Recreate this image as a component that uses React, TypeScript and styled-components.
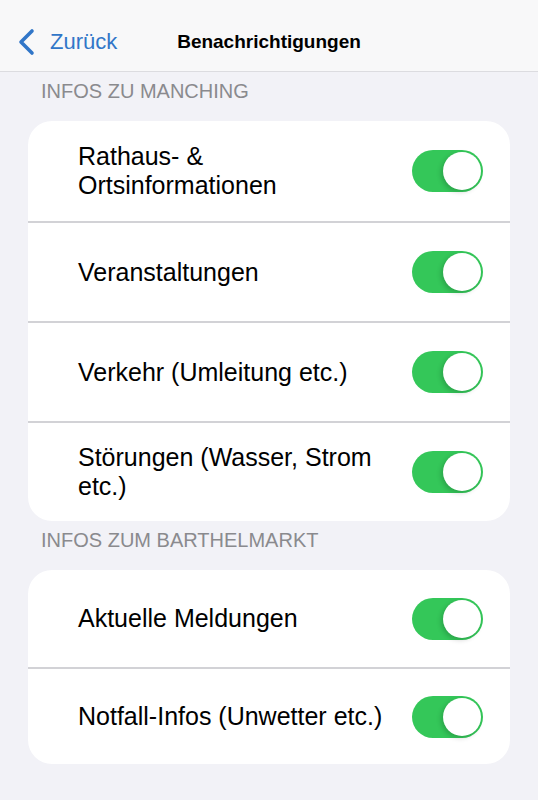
import styled, { createGlobalStyle } from 'styled-components';

const GlobalStyle = createGlobalStyle`
    body {
        margin: 0;
        background: #f2f2f7;
        font-family: 'Liberation Sans', Arial, sans-serif;
    }
`;

const sections = [
    {
        title: 'INFOS ZU MANCHING',
        rowHeight: 100,
        items: [
            'Rathaus- &\nOrtsinformationen',
            'Veranstaltungen',
            'Verkehr (Umleitung etc.)',
            'Störungen (Wasser, Strom etc.)',
        ],
    },
    {
        title: 'INFOS ZUM BARTHELMARKT',
        rowHeight: 97,
        items: ['Aktuelle Meldungen', 'Notfall-Infos (Unwetter etc.)'],
    },
];

const Toggle = ({ on }: { on: boolean }) => (
    <Track $on={on}>
        <Knob $on={on} />
    </Track>
);

const App = () => {
    return (
        <>
            <GlobalStyle />
            <NavBar>
                <BackButton>
                    <svg width="18" height="28" viewBox="0 0 18 28">
                        <path
                            d="M15 3 L4 14 L15 25"
                            fill="none"
                            stroke="#3176c8"
                            strokeWidth="3.6"
                            strokeLinecap="round"
                            strokeLinejoin="round"
                        />
                    </svg>
                    <span>Zurück</span>
                </BackButton>
                <Title>Benachrichtigungen</Title>
            </NavBar>
            <Content>
                {sections.map((section) => (
                    <section key={section.title}>
                        <SectionLabel>{section.title}</SectionLabel>
                        <Card>
                            {section.items.map((item) => (
                                <Row key={item} $height={section.rowHeight}>
                                    <RowText>{item}</RowText>
                                    <Toggle on />
                                </Row>
                            ))}
                        </Card>
                    </section>
                ))}
            </Content>
        </>
    );
};

const NavBar = styled.header`
    position: relative;
    height: 71px;
    background: #f8f8f9;
    border-bottom: 1px solid #dcdce0;
    display: flex;
    align-items: center;
    justify-content: center;
`;

const BackButton = styled.button`
    position: absolute;
    left: 17px;
    top: 28px;
    display: flex;
    align-items: center;
    gap: 15px;
    padding: 0;
    border: none;
    background: none;
    color: #3176c8;
    font-family: 'Liberation Sans', Arial, sans-serif;
    font-size: 22px;
    line-height: 26px;
`;

const Title = styled.h1`
    margin: 0;
    font-size: 19px;
    font-weight: bold;
    color: #000;
    margin-top: 12px;
`;

const Content = styled.main`
    padding: 0 28px;
`;

const SectionLabel = styled.h2`
    margin: 0;
    padding: 7px 13px 18px;
    font-size: 20px;
    line-height: 24px;
    font-weight: normal;
    color: #8a8a8e;
`;

const Card = styled.div`
    background: #fff;
    border-radius: 24px;
    overflow: hidden;
`;

const Row = styled.div<{ $height: number }>`
    min-height: ${({ $height }) => $height}px;
    box-sizing: border-box;
    display: flex;
    align-items: center;
    padding: 20px 27px 20px 50px;
    gap: 12px;

    & + & {
        border-top: 2px solid #d2d2d6;
    }
`;

const RowText = styled.span`
    flex: 1;
    font-size: 25px;
    line-height: 29px;
    color: #000;
    white-space: pre-line;
`;

const Track = styled.div<{ $on: boolean }>`
    position: relative;
    flex-shrink: 0;
    width: 71px;
    height: 42px;
    border-radius: 21px;
    background: ${({ $on }) => ($on ? '#34c759' : '#e9e9ea')};
`;

const Knob = styled.div<{ $on: boolean }>`
    position: absolute;
    top: 2px;
    ${({ $on }) => ($on ? 'right: 2px;' : 'left: 2px;')}
    width: 38px;
    height: 38px;
    border-radius: 50%;
    background: #fff;
    box-shadow: -2px 2px 5px rgba(0, 0, 0, 0.18);
`;

export default App;
